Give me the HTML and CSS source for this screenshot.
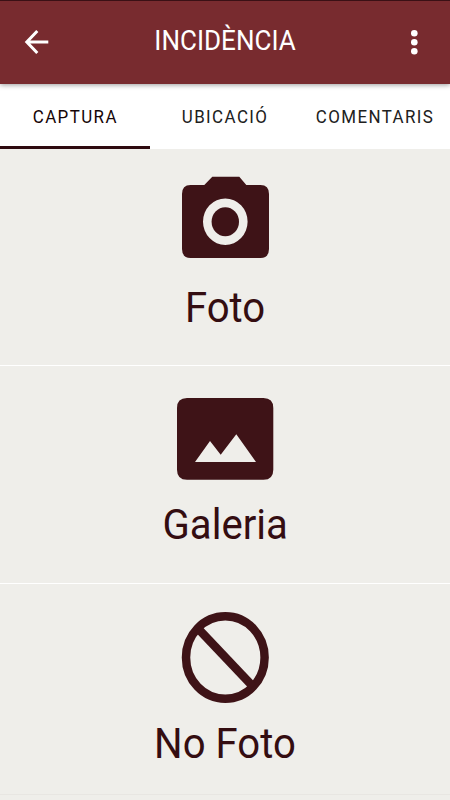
FILE: index.html
```html
<!DOCTYPE html>
<html lang="ca">
<head>
<meta charset="utf-8">
<title>Incidència</title>
<link rel="stylesheet" href="styles.css">
</head>
<body>
<header class="bar">
  <svg class="back" width="26" height="26" viewBox="0 0 26 26"><path d="M13.300 2L2.800 13L13.300 24M3 13H24.300" fill="none" stroke="#fff" stroke-width="3"/></svg>
  <h1 class="title"><span class="title-text">INCIDÈNCIA</span></h1>
  <svg class="more" width="8" height="26" viewBox="0 0 8 26" fill="#fff"><circle cx="4.300" cy="4.200" r="3.300"/><circle cx="4.300" cy="13.200" r="3.300"/><circle cx="4.300" cy="22.300" r="3.300"/></svg>
</header>
<nav class="tabs">
  <a class="tab active"><span class="tab-text">CAPTURA</span></a>
  <a class="tab"><span class="tab-text">UBICACIÓ</span></a>
  <a class="tab"><span class="tab-text">COMENTARIS</span></a>
</nav>
<main>
  <section class="panel">
    <svg class="icon" viewBox="0 0 100 100">
      <path fill-rule="evenodd" d="M15.500 14H29.300L37.300 5.700H64.300L71.300 14H85.500Q94 14 94 23V78Q94 87 85.500 87H15.500Q7 87 7 78V23Q7 14 15.500 14ZM28 50.700a22.300 23.200 0 1 0 44.600 0a22.300 23.200 0 1 0 -44.600 0Z"/>
      <ellipse cx="50.300" cy="50.700" rx="13.700" ry="14.500"/>
    </svg>
    <span class="label">Foto</span>
  </section>
  <section class="panel">
    <svg class="icon" viewBox="0 0 100 100">
      <path fill-rule="evenodd" d="M12 10H88.500Q98.300 10 98.300 20V81.700Q98.300 91.700 88.500 91.700H12Q2 91.700 2 81.700V20Q2 10 12 10ZM20 74H81L61.300 46.300L45.700 66.700L35 53Z"/>
    </svg>
    <span class="label">Galeria</span>
  </section>
  <section class="panel last">
    <svg class="icon" viewBox="0 0 100 100">
      <g fill="none" stroke="#3e1317" stroke-width="8.500"><ellipse cx="50.300" cy="51.500" rx="39.300" ry="41.200"/><path d="M23 22.500L78 80.500"/></g>
    </svg>
    <span class="label">No Foto</span>
  </section>
</main>
</body>
</html>
```
FILE: styles.css
```css
* { box-sizing: border-box; }
body {
  margin: 0;
  height: 800px;
  overflow: hidden;
  background: #efeeea;
  font-family: Roboto, "Liberation Sans", sans-serif;
}
.bar {
  position: relative;
  display: flex;
  align-items: center;
  height: 84px;
  padding: 0 32px 1px 24px;
  border-top: 1px solid #3a1015;
  background: #782b2f;
  box-shadow: 0 1px 5px rgba(0, 0, 0, 0.4);
  z-index: 1;
}
.title {
  flex: 1;
  margin: 0;
  padding: 0 9px 3px 0;
  text-align: center;
  font-size: 28px;
  font-weight: 400;
  line-height: 32px;
  color: #fff;
}
.title-text {
  display: inline-block;
  transform: scaleX(0.93);
}
.tabs {
  display: flex;
  height: 65px;
  background: #fff;
}
.tab {
  display: flex;
  flex: 1 0 0;
  align-items: center;
  justify-content: center;
  border-bottom: 3px solid transparent;
  padding: 3px 0 0 1px;
  font-size: 18px;
  letter-spacing: 1.5px;
  color: #202020;
}
.tab-text { transform: scaleX(0.94); }
.active {
  border-bottom-color: #2e0a0f;
  color: #160507;
}
.panel {
  display: flex;
  flex-direction: column;
  align-items: center;
  height: 217px;
  padding-top: 22px;
  border-bottom: 1px solid #fff;
}
.panel + .panel { height: 218px; }
.panel.last { height: 211px; border-bottom-color: #e8e6e2; }
.icon {
  flex: none;
  width: 100px;
  height: 100px;
  fill: #3e1317;
}
.label {
  margin-top: 11px;
  font-size: 43px;
  line-height: 50px;
  white-space: nowrap;
  color: #340d11;
  transform: scaleX(0.933);
}
.last .label { margin-top: 12px; }
```
